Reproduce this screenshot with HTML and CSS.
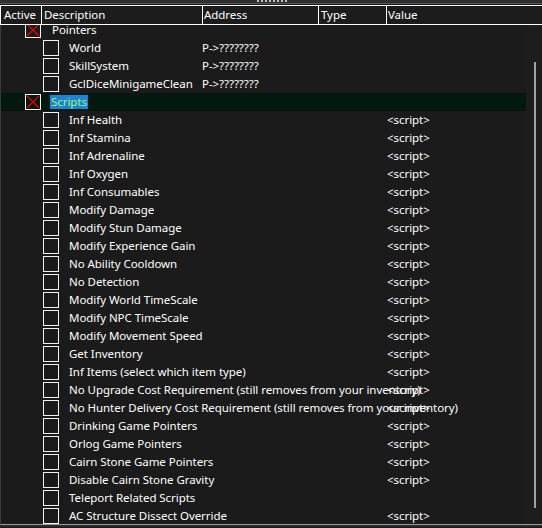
FILE: index.html
```html
<html>
<head>
    <link rel="stylesheet" href="styles.css">
</head>
<body>
    <div class="splitter"><span class="grip"></span></div>

    <div class="header">
        <div class="col col-active">Active</div>
        <div class="col col-desc">Description</div>
        <div class="col col-addr">Address</div>
        <div class="col col-type">Type</div>
        <div class="col col-value">Value</div>
    </div>

    <div class="addresslist">
        <div class="rows">
            <div class="row group">
                <div class="desc"><span class="check crossed"><svg width="14" height="14"><path d="M1 1L13 13M13 1L1 13" stroke="#e80000" stroke-width="1.2"/></svg></span><span class="label">Pointers</span></div>
            </div>
            <div class="row"><div class="desc"><span class="check"></span><span class="label">World</span></div><div class="addr">P-&gt;????????</div></div>
            <div class="row"><div class="desc"><span class="check"></span><span class="label">SkillSystem</span></div><div class="addr">P-&gt;????????</div></div>
            <div class="row"><div class="desc"><span class="check"></span><span class="label">GclDiceMinigameClean</span></div><div class="addr">P-&gt;????????</div></div>
            <div class="row group selected">
                <div class="desc"><span class="check crossed"><svg width="14" height="14"><path d="M1 1L13 13M13 1L1 13" stroke="#e80000" stroke-width="1.2"/></svg></span><span class="label">Scripts</span></div>
            </div>
            <div class="row"><div class="desc"><span class="check"></span><span class="label">Inf Health</span></div><div class="addr"></div><div class="type"></div><div class="value">&lt;script&gt;</div></div>
            <div class="row"><div class="desc"><span class="check"></span><span class="label">Inf Stamina</span></div><div class="addr"></div><div class="type"></div><div class="value">&lt;script&gt;</div></div>
            <div class="row"><div class="desc"><span class="check"></span><span class="label">Inf Adrenaline</span></div><div class="addr"></div><div class="type"></div><div class="value">&lt;script&gt;</div></div>
            <div class="row"><div class="desc"><span class="check"></span><span class="label">Inf Oxygen</span></div><div class="addr"></div><div class="type"></div><div class="value">&lt;script&gt;</div></div>
            <div class="row"><div class="desc"><span class="check"></span><span class="label">Inf Consumables</span></div><div class="addr"></div><div class="type"></div><div class="value">&lt;script&gt;</div></div>
            <div class="row"><div class="desc"><span class="check"></span><span class="label">Modify Damage</span></div><div class="addr"></div><div class="type"></div><div class="value">&lt;script&gt;</div></div>
            <div class="row"><div class="desc"><span class="check"></span><span class="label">Modify Stun Damage</span></div><div class="addr"></div><div class="type"></div><div class="value">&lt;script&gt;</div></div>
            <div class="row"><div class="desc"><span class="check"></span><span class="label">Modify Experience Gain</span></div><div class="addr"></div><div class="type"></div><div class="value">&lt;script&gt;</div></div>
            <div class="row"><div class="desc"><span class="check"></span><span class="label">No Ability Cooldown</span></div><div class="addr"></div><div class="type"></div><div class="value">&lt;script&gt;</div></div>
            <div class="row"><div class="desc"><span class="check"></span><span class="label">No Detection</span></div><div class="addr"></div><div class="type"></div><div class="value">&lt;script&gt;</div></div>
            <div class="row"><div class="desc"><span class="check"></span><span class="label">Modify World TimeScale</span></div><div class="addr"></div><div class="type"></div><div class="value">&lt;script&gt;</div></div>
            <div class="row"><div class="desc"><span class="check"></span><span class="label">Modify NPC TimeScale</span></div><div class="addr"></div><div class="type"></div><div class="value">&lt;script&gt;</div></div>
            <div class="row"><div class="desc"><span class="check"></span><span class="label">Modify Movement Speed</span></div><div class="addr"></div><div class="type"></div><div class="value">&lt;script&gt;</div></div>
            <div class="row"><div class="desc"><span class="check"></span><span class="label">Get Inventory</span></div><div class="addr"></div><div class="type"></div><div class="value">&lt;script&gt;</div></div>
            <div class="row"><div class="desc"><span class="check"></span><span class="label">Inf Items (select which item type)</span></div><div class="addr"></div><div class="type"></div><div class="value">&lt;script&gt;</div></div>
            <div class="row"><div class="desc"><span class="check"></span><span class="label">No Upgrade Cost Requirement (still removes from your inventory)</span></div><div class="addr"></div><div class="type"></div><div class="value">&lt;script&gt;</div></div>
            <div class="row"><div class="desc"><span class="check"></span><span class="label">No Hunter Delivery Cost Requirement (still removes from your inventory)</span></div><div class="addr"></div><div class="type"></div><div class="value">&lt;script&gt;</div></div>
            <div class="row"><div class="desc"><span class="check"></span><span class="label">Drinking Game Pointers</span></div><div class="addr"></div><div class="type"></div><div class="value">&lt;script&gt;</div></div>
            <div class="row"><div class="desc"><span class="check"></span><span class="label">Orlog Game Pointers</span></div><div class="addr"></div><div class="type"></div><div class="value">&lt;script&gt;</div></div>
            <div class="row"><div class="desc"><span class="check"></span><span class="label">Cairn Stone Game Pointers</span></div><div class="addr"></div><div class="type"></div><div class="value">&lt;script&gt;</div></div>
            <div class="row"><div class="desc"><span class="check"></span><span class="label">Disable Cairn Stone Gravity</span></div><div class="addr"></div><div class="type"></div><div class="value">&lt;script&gt;</div></div>
            <div class="row"><div class="desc"><span class="check"></span><span class="label">Teleport Related Scripts</span></div></div>
            <div class="row"><div class="desc"><span class="check"></span><span class="label">AC Structure Dissect Override</span></div><div class="addr"></div><div class="type"></div><div class="value">&lt;script&gt;</div></div>
        </div>
        <div class="scrollbar"><div class="thumb"></div></div>
    </div>
    <div class="statusedge"></div>
</body>
</html>
```

FILE: styles.css
```css
body {
    margin: 0;
    width: 542px;
    height: 528px;
    overflow: hidden;
    background-color: #1b1b1b;
    color: #ffffff;
    font-family: "Noto Sans", "Open Sans", sans-serif;
    font-size: 11.5px;
    letter-spacing: -0.05px;
}

/* splitter above the list */
.splitter {
    height: 3px;
    background-color: #2f2f2f;
    border-bottom: 1px solid #565656;
    position: relative;
}

    .splitter .grip {
        position: absolute;
        left: 257px;
        top: 0;
        width: 30px;
        height: 2px;
        background: repeating-linear-gradient(90deg, #bdbdbd 0 2px, transparent 2px 4px);
    }

.header {
    margin-top: 1px;
    height: 18px;
    display: flex;
    border-top: 1px solid #ffffff;
    border-bottom: 1px solid #ffffff;
    background-color: #1c1c1c;
    line-height: 18px;
    white-space: nowrap;
}

    .header .col {
        border-left: 1px solid #ffffff;
        padding-left: 2px;
        box-sizing: border-box;
    }

.col-active { width: 41px; padding-left: 3px !important; }
.col-desc { width: 161px; }
.col-addr { width: 116px; padding-left: 1px !important; }
.col-type { width: 68px; }
.col-value { flex: 1; padding-left: 1px !important; }

.addresslist {
    display: flex;
    height: 499px;
    overflow: hidden;
    border-left: 1px solid #3a3a3a;
    border-bottom: 1px solid #9c9c9c;
}

.rows {
    flex: 1;
    margin-top: -4px;
}

.row {
    height: 18px;
    display: grid;
    grid-template-columns: 201px 116px 68px 1fr;
    align-items: center;
    white-space: nowrap;
}

    .row.selected {
        background-color: #03190f;
    }

.desc {
    display: flex;
    align-items: center;
    padding-left: 42px;
}

.group .desc {
    padding-left: 24px;
}

.check {
    width: 14px;
    height: 14px;
    border: 1px solid #f2f2f2;
    flex: none;
    display: flex;
}

.label,
.addr,
.value {
    padding-bottom: 1px;
}

.label {
    margin-left: 10px;
}

.group .label {
    margin-left: 11px;
}

.selected .label {
    margin-left: 9px;
    padding: 0 1px 1px;
    line-height: 13px;
    background-color: #1a84d6;
    color: #a6f26c;
}

.value {
    padding-left: 1px;
}

.scrollbar {
    width: 16px;
    background-color: #1d1d1d;
    padding-top: 37px;
    box-sizing: border-box;
}

    .scrollbar .thumb {
        margin-left: 8px;
        width: 2px;
        height: 446px;
        background-color: #a3a3a3;
    }

.statusedge {
    height: 2px;
    background-color: #2a2a2a;
}
```
